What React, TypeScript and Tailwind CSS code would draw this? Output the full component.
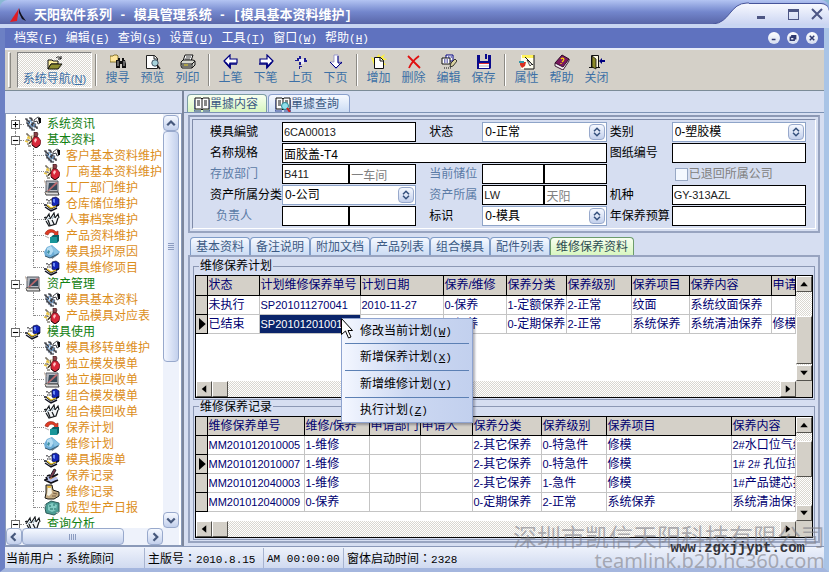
import { Fragment, type ReactNode } from 'react';

type IconName =
  | 'phone' | 'flask' | 'monitor' | 'book' | 'pens' | 'cube' | 'globe' | 'ink' | 'scroll' | 'gem';

interface TreeNode {
  label: string;
  icon: IconName;
  open?: boolean;
  children?: [IconName, string][];
}

const MENUS = [['档案', 'F'], ['编辑', 'E'], ['查询', 'S'], ['设置', 'U'], ['工具', 'T'], ['窗口', 'W'], ['帮助', 'H']];

const TREE: TreeNode[] = [
  { label: '系统资讯', icon: 'phone' },
  {
    label: '基本资料',
    icon: 'flask',
    open: true,
    children: [
      ['phone', '客户基本资料维护'],
      ['flask', '厂商基本资料维护'],
      ['monitor', '工厂部门维护'],
      ['book', '仓库储位维护'],
      ['pens', '人事档案维护'],
      ['cube', '产品资料维护'],
      ['globe', '模具损坏原因'],
      ['book', '模具维修项目'],
    ],
  },
  {
    label: '资产管理',
    icon: 'monitor',
    open: true,
    children: [
      ['phone', '模具基本资料'],
      ['flask', '产品模具对应表'],
    ],
  },
  {
    label: '模具使用',
    icon: 'book',
    open: true,
    children: [
      ['phone', '模具移转单维护'],
      ['flask', '独立模发模单'],
      ['monitor', '独立模回收单'],
      ['book', '组合模发模单'],
      ['pens', '组合模回收单'],
      ['cube', '保养计划'],
      ['globe', '维修计划'],
      ['book', '模具报废单'],
      ['ink', '保养记录'],
      ['scroll', '维修记录'],
      ['gem', '成型生产日报'],
    ],
  },
  { label: '查询分析', icon: 'pens', open: true },
];

const SUB_TABS = ['基本资料', '备注说明', '附加文档', '产品列表', '组合模具', '配件列表', '维修保养资料'];

const PLAN_COLS = ['状态', '计划维修保养单号', '计划日期', '保养/维修', '保养分类', '保养级别', '保养项目', '保养内容', '申请'];
const PLAN_WIDTHS = [52, 101, 83, 63, 60, 65, 58, 82];
const PLAN_ROWS = [
  ['未执行', 'SP201011270041', '2010-11-27', '0-保养', '1-定额保养', '2-正常', '纹面', '系统纹面保养', ''],
  ['已结束', 'SP201012010011', '', '0-保养', '0-定期保养', '2-正常', '系统保养', '系统清油保养', '修模'],
];

const LOG_COLS = ['维修保养单号', '维修/保养', '申请部门', '申请人', '保养分类', '保养级别', '保养项目', '保养内容'];
const LOG_WIDTHS = [97, 65, 51, 52, 69, 65, 125];
const LOG_ROWS = [
  ['MM201012010005', '1-维修', '', '', '2-其它保养', '0-特急件', '修模', '2#水口位气纹'],
  ['MM201012010007', '1-维修', '', '', '2-其它保养', '0-特急件', '修模', '1# 2# 孔位拉伤'],
  ['MM201012040003', '1-维修', '', '', '2-其它保养', '1-急件', '修模', '1#产品键芯损坏'],
  ['MM201012040009', '0-保养', '', '', '0-定期保养', '2-正常', '系统保养', '系统清油保养'],
];

const POPUP = [['修改当前计划', 'W'], ['新增保养计划', 'X'], ['新增维修计划', 'Y'], ['执行计划', 'Z']];

const BEVEL = 'border border-t-white border-l-white border-r-[#55534e] border-b-[#55534e] bg-[#d4d0c8]';
const DITHER = 'bg-[repeating-conic-gradient(#ffffff_0_25%,#dad7d0_0_50%)] bg-[length:2px_2px]';
const XP_BTN = 'flex items-center justify-center rounded-sm border border-[#98a9cc] bg-linear-to-b from-[#f6f9ff] to-[#c3d0ec]';

function Svg({ children, className = 'size-4' }: { children: ReactNode; className?: string }) {
  return (
    <svg viewBox="0 0 16 16" className={`${className} shrink-0`} aria-hidden="true">
      {children}
    </svg>
  );
}

const TREE_ICONS: Record<IconName, ReactNode> = {
  phone: (
    <>
      <path d="M1 5l4-2 4 3 3 2-2 6-4 1-3-4z" fill="#dfe8f4" />
      <path d="M0 3h2v2h2v2h1M4 2h2v1h1v2M1 7h2v3h2v2h2v2h3M6 8h1v2h2M8 6v2h2v3h2v2" stroke="#14161e" fill="none" strokeWidth="1.2" />
      <path d="M3 6l4 5M8 11l2-3M5 4l2 3" stroke="#5f96cc" />
      <path d="M9 4l4-3 2 1v5l-2 1-1-3-3 1z" fill="#fff" stroke="#14161e" strokeWidth=".8" />
      <path d="M13 2h3v5h-2z" fill="#08080c" />
    </>
  ),
  flask: (
    <>
      <path d="M6 3h4l2 4-3 6-6-2z" fill="#e9dfc4" />
      <path d="M1 2h2v2h2M1 8h3v1M2 12h2l3-3M3 14h3M6 4l1 4-3 3" stroke="#4c4434" fill="none" />
      <path d="M0 9l3 1M3 4l2 3M2 6h2" stroke="#e8c440" strokeWidth="1.4" />
      <path d="M9 0h3l1 2-1 3H9z" fill="#8a4248" stroke="#2c1014" strokeWidth=".6" />
      <path d="M9 5h4l3 4-1 4-4 3-4-3V8z" fill="#d82638" stroke="#5c0c18" strokeWidth=".7" />
      <path d="M9 8l2-2 1 2-2 3z" fill="#ffc4c4" />
      <path d="M7 13l4 3 4-3" stroke="#28080c" fill="none" />
    </>
  ),
  monitor: (
    <>
      <path d="M2 1h12v11H2z" fill="#b4b8c0" stroke="#5a5e66" />
      <path d="M5 3h8v7H4z" fill="#34495a" />
      <path d="M3 11L12 2l2 1-9 8z" fill="#b8686c" />
      <path d="M1 12h13l1 3H2z" fill="#dcdcdc" stroke="#3c3c3c" />
      <path d="M0 0l2 5M1 13l3-1" stroke="#c9b8aa" />
    </>
  ),
  book: (
    <>
      <path d="M2 3l6-2 2 8-3 3-6-3z" fill="#fff" />
      <path d="M8 2l4-1 3 2v6l-3 2-4-2z" fill="#1426b8" stroke="#0c1040" strokeWidth=".7" />
      <path d="M9 3l2 0v4l-2-1z" fill="#6c8cf4" />
      <path d="M3 3v2M5 4v2M7 3v2M3 7h4" stroke="#18181e" strokeWidth="1.2" strokeDasharray="1.500 .7" />
      <path d="M0 9h2l5 4 7-4h1M1 11l6 4 6-3" stroke="#0d0f1e" strokeWidth="1.4" fill="none" />
      <path d="M3 9l4 3 5-2" stroke="#e8c428" fill="none" strokeWidth="1.3" />
    </>
  ),
  pens: (
    <>
      <path d="M2 6l3-4 2 4 3-5 2 4 3-2-2 8-6 3-5-3z" fill="#f4f6f8" />
      <path d="M1 8l4-6 1 5M6 7l4-6 1 5M11 6l3-4 1 4M2 9l3 5 7-2 2-6M4 8l2 5M8 8l2 4M0 6l2-1" stroke="#15191d" fill="none" strokeWidth="1.2" />
      <path d="M3 8l3-3M8 7l2-3" stroke="#8ba5b4" />
    </>
  ),
  cube: (
    <>
      <path d="M1 6c1-5 8-6 11-2l2-1v5H9l2-2C8 3 5 4 4 7z" fill="#e03c24" stroke="#8c2014" strokeWidth=".6" />
      <path d="M7 9l2-2h6v6l-2 2z" fill="#0b6068" />
      <path d="M6 9h7v6H6z" fill="#18969a" />
      <path d="M1 8l4 2" stroke="#a8a8a8" />
    </>
  ),
  globe: (
    <>
      <path d="M6 11l9-4v3l-7 5z" fill="#6c7880" />
      <path d="M0 8l3-5 5-2 8 7-4 4-6 2-5-2z" fill="#6cacd6" />
      <path d="M3 4l4-2 3 4-3 5-4-1z" fill="#b4dcf2" />
      <path d="M8 2l7 6-4 3-2-4z" fill="#8cc4e4" />
      <path d="M4 6l2 1-1 3-2-1z" fill="#3c8ea0" />
      <path d="M1 12l5 2 8-4" stroke="#34566c" fill="none" />
    </>
  ),
  ink: (
    <>
      <path d="M3 9l6-2 5 3-5 5-7-3z" fill="#b8c4f0" />
      <path d="M5 10L10 1l2 1-4 8z" fill="#7b3d50" stroke="#191922" strokeWidth=".9" />
      <path d="M6 11l7-4" stroke="#c08040" strokeWidth="1.4" />
      <path d="M2 9l1 2-2 1 6 3 7-3M8 9l6-3M3 8l3-1" stroke="#101018" fill="none" strokeWidth="1.8" />
    </>
  ),
  scroll: (
    <>
      <path d="M2 1h6l1 5 6 2v4l-5 3H4l-3-1 1-5z" fill="#c4ac84" stroke="#1c1a14" />
      <path d="M4 3h3l1 6-3 3-2-1z" fill="#f7f3e4" />
      <path d="M3 2h4v2H4z" fill="#e8bc40" />
      <path d="M9 9l4 1M8 12l4 0" stroke="#7a6044" />
    </>
  ),
  gem: (
    <>
      <path d="M2 4l5-3 8 2v9l-5 3-8-2-1-5z" fill="#4c9c94" stroke="#2c5a58" />
      <path d="M4 5l4-2 5 2-1 5-4 2-4-2z" fill="#84ccc4" />
      <path d="M5 6h2M9 5h2M6 9h3M11 8v2" stroke="#1f6a64" />
      <path d="M0 5l2 1M12 13l3-1" stroke="#b4bcbc" />
    </>
  ),
};

const TOOL_ICONS: Record<string, ReactNode> = {
  搜寻: (
    <>
      <path d="M0 2h3l1-1h3l1 1v6H0z" fill="#ffe79c" stroke="#6b5a10" strokeWidth=".8" />
      <path d="M6 6h2V4h2v3h2V4h2v2h1l1 4v4h-4v-4h-2v4H6v-4z" fill="#111" />
      <path d="M8 7v5M14 7v5" stroke="#fff" strokeWidth=".7" />
    </>
  ),
  预览: (
    <>
      <path d="M1.500 1.500h8l3 3v10h-11z" fill="#fff" stroke="#222" />
      <path d="M9 1v4h4" fill="none" stroke="#222" />
      <circle cx="10" cy="9" r="3.200" fill="#a8d4dc" stroke="#456" />
      <path d="M12 11l3 4" stroke="#222" strokeWidth="1.600" />
    </>
  ),
  列印: (
    <>
      <path d="M5 1h8l-2 6H3z" fill="#fff" stroke="#111" />
      <path d="M6 3h5M5 5h5" stroke="#111" strokeWidth=".8" />
      <path d="M1 8l2-2h10l2 1v4l-3 3H2l-1-2z" fill="#d8d8d0" stroke="#111" />
      <path d="M1 10h11l3-3M2 12h9M12 10v4" stroke="#111" fill="none" />
      <path d="M4 11h4" stroke="#e8d020" />
    </>
  ),
  上笔: (
    <>
      <path d="M1 7l6-6v4h7v4H7v5z" fill="#fff" stroke="#000080" strokeWidth="1.200" />
      <path d="M2 8l5 5v-3h7" fill="none" stroke="#000080" strokeWidth="1.700" />
    </>
  ),
  下笔: (
    <>
      <path d="M15 7L9 1v4H2v4h7v5z" fill="#fff" stroke="#000080" strokeWidth="1.200" />
      <path d="M14 8l-5 5v-3H1" fill="none" stroke="#000080" strokeWidth="1.700" />
    </>
  ),
  上页: (
    <>
      <path d="M3 6l5-5v4h3v5H7V7z" fill="#e8e8f4" />
      <path d="M2 6h2V4h2V2h2v3H6v2H2zM11 4h2v2h-2zM6 8h2v3H6zM11 6h3v2h-3zM6 12h3v1H7v2H6z" fill="#1c1c96" />
    </>
  ),
  下页: (
    <>
      <path d="M6 1h4v7h4l-6 7-6-7h4z" fill="#fff" stroke="#8a8ac8" strokeWidth=".8" />
      <path d="M10 2v7h4M2 8l6 6 6-6" fill="none" stroke="#000080" />
    </>
  ),
  增加: (
    <>
      <path d="M8 0l1 3 5-3-2 4 4 1-4 2 3 4H3L0 3l4 2z" fill="#fff23c" />
      <path d="M3.500 3.500h6l3 3v8h-9z" fill="#fff" stroke="#111" />
      <path d="M9 3v4h4" fill="none" stroke="#111" />
    </>
  ),
  删除: <path d="M2 2l12 12M13 2C9 5 5 9 3 14" stroke="#e01010" strokeWidth="1.800" fill="none" />,
  编辑: (
    <>
      <path d="M5 1h7v6H5z" fill="#fff" stroke="#000080" />
      <path d="M1 4h8v6H1z" fill="#fff" stroke="#111" />
      <path d="M3 6h4M3 8h4M7 3h4" stroke="#000080" strokeDasharray="1.500 1" />
      <path d="M9 13l1-4 4-4 2 2-4 5z" fill="#d8d0a0" stroke="#111" strokeWidth=".8" />
      <path d="M3 14h7" stroke="#111" strokeDasharray="1 1" />
    </>
  ),
  保存: (
    <>
      <path d="M1 1h14v13l-1 1H1z" fill="#0a0a8c" />
      <path d="M4 0h8v7H4z" fill="#d4d0c8" />
      <path d="M9 0h2v5H9z" fill="#0a0a8c" />
      <path d="M3 9h10v5H3z" fill="#fff" />
      <path d="M3 9h10v1H3z" fill="#e03030" />
      <path d="M3 12h10" stroke="#b0b0b8" />
    </>
  ),
  属性: (
    <>
      <path d="M2 1h13v14H2z" fill="#fffef0" />
      <path d="M3 1h12v3H3z" fill="#fff25a" />
      <path d="M15 1v14H5M6 3l8 8" stroke="#111" fill="none" />
      <path d="M8 6l5 4-2 2z" fill="#f4f4f4" stroke="#111" strokeWidth=".7" />
      <path d="M1 8h6l-1 4-3 2-2-3z" fill="#d83020" />
      <path d="M0 7h5v2H0z" fill="#3498a8" />
    </>
  ),
  帮助: (
    <>
      <path d="M1 9l7-8 7 4-6 9z" fill="#7c1860" stroke="#2c0826" />
      <path d="M1 9v3l8 4 6-9V5L9 13z" fill="#f6f0f4" stroke="#2c0826" strokeWidth=".9" />
      <path d="M7 5c2-2 4 0 2 2L8 8M7 9v1" stroke="#ffd800" strokeWidth="1.300" fill="none" />
    </>
  ),
  关闭: (
    <>
      <path d="M2.500 1.500h7v12h-7z" fill="#fffbe0" stroke="#111" />
      <path d="M3 2l4 3v10l-4-2z" fill="#8c8a28" stroke="#111" strokeWidth=".8" />
      <path d="M0 13.500h3M9 13.500h2" stroke="#111" />
      <path d="M10 7l3-3v2h3v2h-3v2z" fill="#000080" />
    </>
  ),
};

const TOOL_GROUPS = [
  ['搜寻', '预览', '列印'],
  ['上笔', '下笔', '上页', '下页'],
  ['增加', '删除', '编辑', '保存'],
  ['属性', '帮助', '关闭'],
];

// Latin runs are set one size smaller than the CJK text round them
function Mixed({ text }: { text: string }) {
  return (
    <>
      {text.split(/([\x20-\x7e]+)/).map((part, i) =>
        i % 2 ? <span key={i} className="text-[11px]">{part}</span> : <Fragment key={i}>{part}</Fragment>
      )}
    </>
  );
}

function Mono({ children }: { children: ReactNode }) {
  return <span className="font-['Liberation_Mono',monospace] text-[11px]">{children}</span>;
}

function Hotkey({ k }: { k: string }) {
  return <Mono>(<u>{k}</u>)</Mono>;
}

function TitleBar() {
  return (
    <header className="flex h-7 shrink-0 justify-between rounded-t-lg border-b-4 border-[#c9d6f2] bg-linear-to-b from-[#b3c4f2] via-[#7386cc] to-[#5966a8]">
      <div className="flex items-center gap-2 pl-2.5 pt-1.5">
        <svg viewBox="0 0 16 14" className="h-3.5 w-4" aria-hidden="true">
          <path d="M9 0L7 13 0 14C2 11 6 5 9 0z" fill="#e01c24" />
          <path d="M9 0c1 5 4 9 7 13l-4-2-3-6z" fill="#10101c" />
        </svg>
        <h1 className="whitespace-pre text-[13px] font-bold leading-4 text-white">
          天阳软件系列<span className="font-['Liberation_Mono',monospace] text-xs"> - </span>模具管理系统
          <span className="font-['Liberation_Mono',monospace] text-xs"> - [</span>模具基本资料维护
          <span className="font-['Liberation_Mono',monospace] text-xs">]</span>
        </h1>
      </div>
      <div className="flex">
        <svg viewBox="0 0 36 24" className="h-6 w-9" aria-hidden="true">
          <defs>
            <linearGradient id="cap" x1="0" y1="0" x2="0" y2="1">
              <stop offset="0" stopColor="#f8f9ff" />
              <stop offset="1" stopColor="#ccd6f2" />
            </linearGradient>
          </defs>
          <path d="M0 24C17 23 17 3 34 3h2v21z" fill="url(#cap)" />
          <path d="M0 24C17 23 17 3 34 3h2" fill="none" stroke="#46549a" />
        </svg>
        <div className="mt-[3px] flex items-center gap-2 rounded-tr-lg border-t border-[#46549a] bg-linear-to-b from-[#f8f9ff] to-[#ccd6f2] pl-1 pr-1 text-[#4d5684]">
          <button aria-label="最小化" className="flex size-4 items-end justify-center pb-[3px]">
            <span className="h-[3px] w-2 bg-current" />
          </button>
          <button aria-label="最大化" className="ml-2 flex size-4 items-center justify-center">
            <span className="size-[11px] border border-t-[3px] border-current" />
          </button>
          <button aria-label="关闭窗口" className="flex size-4 items-center justify-center">
            <Svg className="size-4">
              <path d="M3 3l10 10M13 3L3 13" stroke="currentColor" strokeWidth="2" />
            </Svg>
          </button>
        </div>
      </div>
    </header>
  );
}

function MenuBar() {
  return (
    <nav className="flex h-5 shrink-0 items-center justify-between bg-[#5f72bf] pl-[9px] pr-1.5 text-white">
      <div className="flex gap-2">
        {MENUS.map(([name, k]) => (
          <button key={k} className="leading-4">{name}<Hotkey k={k} /></button>
        ))}
      </div>
      <div className="flex gap-[7px]">
        {['M5 10h5', 'M6.500 7V5h5v4h-2M4.500 7h5v4h-5z', 'M5 5l6 6M11 5l-6 6'].map((d, i) => (
          <button key={d} aria-label={['缩小', '还原', '关闭'][i]} className="size-3 rounded-full bg-linear-to-b from-white to-[#d4dcf0]">
            <Svg className="size-3"><path d={d} stroke="#303a70" strokeWidth="2" fill="none" /></Svg>
          </button>
        ))}
      </div>
    </nav>
  );
}

function Divider() {
  return <span className="mx-[3px] h-8 w-0.5 shrink-0 border-l border-r border-l-[#8c8a84] border-r-white" />;
}

function Toolbar() {
  return (
    <div className="flex h-[43px] shrink-0 items-center border-t-2 border-b border-t-[#e8ecf8] border-b-[#7c8c98] bg-[#d4d0c8] pl-[3px] text-[#3d70a6]">
      <span className="mr-1.5 h-9 w-[3px] border border-t-white border-l-white border-r-[#8c8a84] border-b-[#8c8a84]" />
      <button className={`flex h-9 w-[75px] flex-col items-center border border-t-[#808080] border-l-[#808080] border-r-white border-b-white pt-0.5 ${DITHER}`}>
        <Svg>
          <path d="M1 5h4l1 1h5v3H4l-3 5z" fill="#fff0a0" stroke="#111" />
          <path d="M1 14l3-5h11l-4 5z" fill="#8c8c30" stroke="#111" />
          <path d="M9 3c2-2 4-1 5 1M14 1v3h-3" fill="none" stroke="#111" />
        </Svg>
        <span className="leading-4">系统导航<span className="text-[11px]">(<u>N</u>)</span></span>
      </button>
      {TOOL_GROUPS.map((group, i) => (
        <Fragment key={i}>
          <Divider />
          {group.map((name) => (
            <button key={name} className="flex h-9 w-[35px] flex-col items-center pt-0.5">
              <Svg>{TOOL_ICONS[name]}</Svg>
              <span className="leading-4">{name}</span>
            </button>
          ))}
        </Fragment>
      ))}
    </div>
  );
}

function Chevron({ d }: { d: string }) {
  return <Svg className="size-3"><path d={d} fill="none" stroke="#46587c" strokeWidth="3" /></Svg>;
}

function Sidebar() {
  const guide = 'border-l border-dotted border-[#8c8c8c]';
  return (
    <aside className="flex w-[179px] shrink-0 flex-col border-r-2 border-[#7c869c] pt-[22px]">
      <div className="flex min-h-0 flex-1 flex-col border border-[#8a9ab8] bg-white pr-0.5">
        <div className="flex min-h-0 flex-1">
          <ul className="min-w-0 flex-1 overflow-hidden pl-px pt-0.5">
            {TREE.map((node) => (
              <li key={node.label}>
                <div className="flex h-4 items-center">
                  <span className="ml-1 flex h-4 w-[9px] flex-col items-center">
                    <span className={`flex-1 ${guide}`} />
                    <button aria-label={node.label} className="flex size-[9px] items-center justify-center border border-[#6c6c6c] bg-white">
                      <Svg className="size-[7px]">
                        <path d={node.open ? 'M2 8h12' : 'M2 8h12M8 2v12'} stroke="#000" strokeWidth="2.500" />
                      </Svg>
                    </button>
                    <span className={`flex-1 ${guide}`} />
                  </span>
                  <span className="mr-px w-1 border-t border-dotted border-[#8c8c8c]" />
                  <Svg>{TREE_ICONS[node.icon]}</Svg>
                  <button className="ml-1.5 whitespace-nowrap leading-4 text-[#118011]">{node.label}</button>
                </div>
                <ul>
                  {node.children?.map(([icon, label], i) => (
                    <li key={label} className="flex h-4 items-start">
                      <span className={`ml-2 h-4 w-[18px] shrink-0 ${guide}`} />
                      <span className={`w-[11px] shrink-0 ${guide} ${i === node.children!.length - 1 ? 'h-2' : 'h-4'}`}>
                        <span className="block h-2 border-b border-dotted border-[#8c8c8c]" />
                      </span>
                      <Svg>{TREE_ICONS[icon]}</Svg>
                      <button className="ml-1.5 whitespace-nowrap leading-4 text-[#dc8e1c]">{label}</button>
                    </li>
                  ))}
                </ul>
              </li>
            ))}
          </ul>
          <div className="flex w-4 flex-col bg-[#eef2fb] pt-px">
            <button aria-label="向上" className={`h-4 ${XP_BTN}`}><Chevron d="M3 11l5-5 5 5" /></button>
            <div className="flex flex-[23] flex-col items-center justify-center gap-px rounded-sm border border-[#98a9cc] bg-linear-to-r from-[#f2f6ff] to-[#c3d0ec]">
              {[0, 1, 2, 3].map((n) => <span key={n} className="h-px w-1.5 bg-[#8c9cc0]" />)}
            </div>
            <div className="flex-[15]" />
            <button aria-label="向下" className={`h-4 ${XP_BTN}`}><Chevron d="M3 6l5 5 5-5" /></button>
          </div>
        </div>
        <div className="flex h-[17px] shrink-0 bg-[#eef2fb] pr-4">
          <button aria-label="向左" className={`w-4 ${XP_BTN}`}><Chevron d="M10 3L5 8l5 5" /></button>
          <div className={`flex-[102] gap-px ${XP_BTN}`}>
            {[0, 1, 2, 3].map((n) => <span key={n} className="h-1.5 w-px bg-[#8c9cc0]" />)}
          </div>
          <div className="flex-[24]" />
          <button aria-label="向右" className={`w-4 ${XP_BTN}`}><Chevron d="M6 3l5 5-5 5" /></button>
        </div>
      </div>
    </aside>
  );
}

function BookIcon({ lens = false }: { lens?: boolean }) {
  return (
    <Svg>
      <path d="M1 2h6l1 1 1-1h6v11H9l-1 1-1-1H1z" fill="#fff" stroke="#111" />
      <path d="M8 3v11M3 5h3M3 7h3M3 9h3M10 5h3M10 7h3M10 9h3" stroke="#111" />
      <path d="M0 4v11h7M16 4v11H9" fill="none" stroke="#2c3e90" />
      {lens && (
        <>
          <circle cx="10" cy="10" r="3.500" fill="#90e0ec" stroke="#2a8896" />
          <path d="M12 12l3 4" stroke="#d02020" strokeWidth="2" />
        </>
      )}
    </Svg>
  );
}

function Label({ htmlFor, dim, children }: { htmlFor: string; dim?: boolean; children: ReactNode }) {
  return (
    <label htmlFor={htmlFor} className={`self-center whitespace-nowrap leading-4 ${dim ? 'text-[#5b7ba6]' : 'text-black'}`}>
      {children}
    </label>
  );
}

function Field({ id, value = '', label, className = 'text-[11px] text-[#222]' }: { id?: string; value?: string; label?: string; className?: string }) {
  return (
    <input
      id={id}
      aria-label={label}
      defaultValue={value}
      className={`h-5 w-full min-w-0 border border-black bg-white px-px ${className}`}
    />
  );
}

function Combo({ id, value }: { id: string; value: string }) {
  return (
    <div className="relative h-5">
      <select id={id} className="h-5 w-full appearance-none border border-[#8ea4c8] bg-white pl-0.5 text-xs leading-4 text-black">
        <option>{value}</option>
      </select>
      <span className={`pointer-events-none absolute right-0.5 top-0.5 size-4 ${XP_BTN}`}>
        <Svg className="size-3"><path d="M4 7l4-4 4 4M4 9l4 4 4-4" fill="none" stroke="#34507c" strokeWidth="2" /></Svg>
      </span>
    </div>
  );
}

function RecordForm() {
  return (
    <section className="mx-1 mt-0.5 border-2 border-[#98a4c0] border-t-[#8c98b4] p-0.5">
      <form className="border border-[#7f8ba8] border-r-white border-b-white py-0.5 pr-[9px]">
        <div className="grid grid-cols-[89px_134fr_66px_124fr_65px_134fr] gap-y-px [&>label]:pl-[17px]">
          <Label htmlFor="code">模具編號</Label>
          <Field id="code" value="6CA00013" />
          <Label htmlFor="state"><span className="-ml-1">状态</span></Label>
          <Combo id="state" value="0-正常" />
          <label htmlFor="kind" className="self-center !pl-[3px] leading-4">类别</label>
          <Combo id="kind" value="0-塑胶模" />

          <Label htmlFor="spec">名称规格</Label>
          <div className="col-span-3"><Field id="spec" value="面胶盖-T4" className="text-xs text-black" /></div>
          <label htmlFor="drawing" className="self-center !pl-[3px] leading-4">图纸编号</label>
          <Field id="drawing" />

          <Label htmlFor="dept" dim>存放部门</Label>
          <div className="flex">
            <Field id="dept" value="B411" />
            <Field label="部门名称" value="一车间" className="text-xs text-[#808080]" />
          </div>
          <Label htmlFor="store" dim><span className="-ml-1">当前储位</span></Label>
          <div className="flex">
            <Field id="store" />
            <Field label="储位名称" />
          </div>
          <label className="col-span-2 flex items-center gap-px !pl-[68px] leading-4 text-[#808080]">
            <input type="checkbox" className="size-[13px] appearance-none border border-[#98a8c4] bg-[#f4f8ff]" />
            已退回所属公司
          </label>

          <Label htmlFor="owner">资产所属分类</Label>
          <Combo id="owner" value="0-公司" />
          <Label htmlFor="belong" dim><span className="-ml-1">资产所属</span></Label>
          <div className="flex">
            <Field id="belong" value="LW" />
            <Field label="所属名称" value="天阳" className="text-xs text-[#808080]" />
          </div>
          <label htmlFor="model" className="self-center !pl-[3px] leading-4">机种</label>
          <Field id="model" value="GY-313AZL" />

          <Label htmlFor="keeper" dim><span className="ml-1.5">负责人</span></Label>
          <div className="flex">
            <Field id="keeper" />
            <Field label="负责人姓名" />
          </div>
          <Label htmlFor="mark"><span className="-ml-1">标识</span></Label>
          <Combo id="mark" value="0-模具" />
          <label htmlFor="budget" className="self-center whitespace-nowrap !pl-[3px] leading-4">年保养预算</label>
          <Field id="budget" />
        </div>
      </form>
    </section>
  );
}

function Arrow({ d }: { d: string }) {
  return <Svg className="size-3"><path d={d} fill="#000" /></Svg>;
}

interface DataGridProps {
  title: string;
  cols: string[];
  widths: number[];
  rows: string[][];
  current: number;
  selectedCol?: number;
  thumb: string;
}

function DataGrid({ title, cols, widths, rows, current, selectedCol, thumb }: DataGridProps) {
  return (
    <fieldset className="flex min-h-0 min-w-0 flex-1 basis-0 flex-col border border-[#8c98b4] px-px pb-px pt-0.5">
      <legend className="ml-1 px-px leading-[14px] text-black">{title}</legend>
      <div className="flex min-h-0 flex-1 border border-black bg-white">
        <div className="flex min-w-0 flex-1 flex-col">
          <div className="min-h-0 flex-1 overflow-hidden">
            <table className="w-full table-fixed border-collapse text-[#000070]">
              <colgroup>
                <col className="w-[11px]" />
                {widths.map((w, i) => <col key={i} style={{ width: w }} />)}
                <col />
              </colgroup>
              <thead>
                <tr className="h-[19px] bg-[#d4d0c8]">
                  <th className="border-r border-b border-black" />
                  {cols.map((c) => (
                    <th key={c} className="overflow-hidden whitespace-nowrap border-r border-b border-black p-0 pl-px text-left font-normal leading-4">
                      <Mixed text={c} />
                    </th>
                  ))}
                </tr>
              </thead>
              <tbody>
                {rows.map((row, r) => (
                  <tr key={r} className="h-[19px]">
                    <td className="border-r border-b border-black bg-[#d4d0c8] p-0">
                      {r === current && <Arrow d="M4 0l9 8-9 8z" />}
                    </td>
                    {row.map((cell, c) => (
                      <td
                        key={c}
                        className={`overflow-hidden whitespace-nowrap border-r border-b border-[#c4c4c4] p-0 pl-px leading-4 ${
                          r === current && c === selectedCol ? 'bg-[#0a246a] text-white' : ''
                        }`}
                      >
                        <Mixed text={cell} />
                      </td>
                    ))}
                  </tr>
                ))}
              </tbody>
            </table>
          </div>
          <div className={`flex h-4 shrink-0 ${DITHER}`}>
            <button aria-label="向左" className={`flex w-4 items-center justify-center ${BEVEL}`}><Arrow d="M11 3L5 8l6 5z" /></button>
            <span className={`w-4 ${BEVEL}`} />
            <button aria-label="向右" className={`ml-auto flex w-4 items-center justify-center ${BEVEL}`}><Arrow d="M5 3l6 5-6 5z" /></button>
          </div>
        </div>
        <div className="flex w-4 flex-col bg-[#d4d0c8]">
          <button aria-label="向上" className={`flex h-4 items-center justify-center ${BEVEL}`}><Arrow d="M3 11l5-6 5 6z" /></button>
          <div className={`flex-1 ${DITHER}`}>
            <div className={`${thumb} ${BEVEL}`} />
          </div>
          <button aria-label="向下" className={`mb-4 flex h-4 items-center justify-center ${BEVEL}`}><Arrow d="M3 5l5 6 5-6z" /></button>
        </div>
      </div>
    </fieldset>
  );
}

function PopupMenu() {
  return (
    <div className="absolute left-[157px] top-[227px] w-[132px] border border-[#8fa4d0] bg-linear-to-r from-[#f4f7ff] via-[#ccd8f2] to-[#c2d0ee] shadow-[2px_2px_2px_rgba(60,60,80,0.4)]">
      {POPUP.map(([name, k], i) => (
        <Fragment key={k}>
          {i > 0 && <hr className="mx-[3px] border-t border-[#5c80b4]" />}
          <button className={`block w-full pl-[18px] text-left text-black ${i === 0 || i === 3 ? 'h-6' : 'h-[26px]'}`}>
            {name}<Hotkey k={k} />
          </button>
        </Fragment>
      ))}
      <svg viewBox="0 0 12 21" className="absolute -left-px -top-px h-[21px] w-3" aria-hidden="true">
        <path d="M.5.5v16l4-3.500 3 7 2.500-1-3-6.500h4.500z" fill="#fff" stroke="#000" />
      </svg>
    </div>
  );
}

function StatusBar() {
  const colon = <span className="font-['Noto_Sans_CJK_TC',sans-serif]" lang="zh-TW">：</span>;
  const cell = 'h-5 border-r border-[#a8b4d0] pl-[3px] leading-5';
  return (
    <footer className="flex h-[22px] shrink-0 items-center whitespace-nowrap border-t border-[#8a98b8] bg-linear-to-b from-[#eef2fb] to-[#d0daf0] text-black">
      <div className={`w-[140px] ${cell} !pl-px`}>当前用户{colon}系统顾问</div>
      <div className={`w-[119px] ${cell}`}>主版号{colon}<Mono>2010.8.15</Mono></div>
      <div className={`w-20 ${cell}`}><Mono>AM 00:00:00</Mono></div>
      <div className="h-5 flex-1 pl-[3px] leading-5">窗体启动时间{colon}<Mono>2328</Mono></div>
    </footer>
  );
}

export default function App() {
  return (
    <div className="relative flex h-screen flex-col overflow-hidden bg-[#8ab8d4] text-xs font-['Liberation_Sans','Noto_Sans_CJK_SC',sans-serif]">
      <TitleBar />
      <div className="flex min-h-0 flex-1 flex-col border-l-[5px] border-r-[5px] border-b-4 border-l-[#6c80c4] border-r-[#a9c4e6] border-b-[#a4b6de] bg-[#d6def1]">
        <MenuBar />
        <Toolbar />
        <div className="flex min-h-0 flex-1">
          <Sidebar />
          <main className="relative flex min-w-0 flex-1 flex-col">
            <div className="flex h-[22px] shrink-0 items-end border-b border-[#7c92b4] px-[3px] text-[#3c5a84]">
              <button className="flex h-[18px] w-20 items-center rounded-t border border-b-0 border-[#7c9ca4] bg-linear-to-b from-[#f8fff0] to-[#d8f6c0] pl-1.5">
                <BookIcon />單據内容
              </button>
              <button className="ml-px flex h-[18px] w-[82px] items-center rounded-t border border-b-0 border-[#8aa0cc] bg-linear-to-b from-[#f6f9ff] to-[#ccdcf4] pl-1.5">
                <BookIcon lens />單據查詢
              </button>
            </div>
            <RecordForm />
            <div className="mt-1 flex h-[18px] shrink-0 px-1.5 text-[#3c5a84]">
              {SUB_TABS.map((tab) => (
                <button
                  key={tab}
                  className={`whitespace-nowrap rounded-t border border-b-0 px-[5px] leading-4 ${
                    tab === '维修保养资料'
                      ? 'border-[#6c9c6c] bg-linear-to-b from-[#f8fff0] to-[#d8f6c0] text-[#2c4c50]'
                      : 'border-[#7f9cc8] bg-linear-to-b from-[#f6f9ff] to-[#ccdcf4]'
                  }`}
                >
                  {tab}
                </button>
              ))}
            </div>
            <div className="mx-1 mb-[3px] flex min-h-0 flex-1 flex-col border-2 border-[#98a4c0] px-[3px] pb-px pt-0.5">
              <DataGrid title="维修保养计划" cols={PLAN_COLS} widths={PLAN_WIDTHS} rows={PLAN_ROWS} current={1} selectedCol={1} thumb="mt-6 h-12" />
              <DataGrid title="维修保养记录" cols={LOG_COLS} widths={LOG_WIDTHS} rows={LOG_ROWS} current={1} thumb="mt-2 h-9" />
            </div>
            <PopupMenu />
          </main>
        </div>
        <StatusBar />
      </div>
      <div className="pointer-events-none absolute bottom-0 right-1 flex flex-col items-end whitespace-nowrap text-[#808088]/60">
        <span className="text-2xl leading-6">深圳市凯信天阳科技有限公司</span>
        <span className="font-['Noto_Sans',sans-serif] text-xl leading-[22px]">teamlink.b2b.hc360.com</span>
      </div>
      <span className="pointer-events-none absolute bottom-4 right-6 font-['Liberation_Mono',monospace] text-sm font-bold leading-4 text-[#33333a]">
        www.zgxjjypt.com
      </span>
    </div>
  );
}
